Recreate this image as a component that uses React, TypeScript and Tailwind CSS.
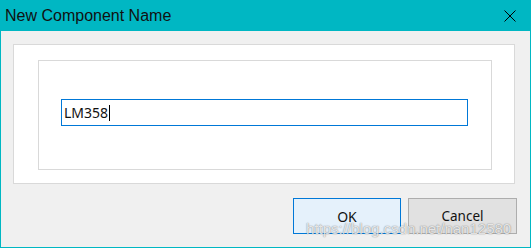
export default function App() {
  return (
    <div
      className="relative w-[531px] h-[248px] flex flex-col bg-[#f0f0f0] border-x border-b border-[#00b7c3] overflow-hidden"
      style={{ fontFamily: '"Noto Sans", "Liberation Sans", sans-serif' }}
    >
      {/* title bar */}
      <div className="h-[31px] -mx-px flex items-center justify-between bg-[#00b7c3] pl-[5px] pr-[15px] shrink-0">
        <span className="text-[16px] text-[#111] leading-none font-['Liberation_Sans',sans-serif]">
          New Component Name
        </span>
        <svg width="12" height="12" viewBox="0 0 12 12" className="mt-px">
          <path d="M0.5 0.5 L11.5 11.5 M11.5 0.5 L0.5 11.5" stroke="#000" strokeWidth="1" />
        </svg>
      </div>

      {/* outer panel */}
      <div className="mt-[13px] ml-[12px] w-[502px] h-[140px] bg-white border border-[#d9d9d9] pl-[24px] pt-[15px]">
        <div className="w-[454px] h-[110px] border border-[#d9d9d9] pl-[22px] pt-[38px]">
          <div className="w-[407px] h-[27px] border border-[#0078d7] bg-white flex items-center pl-[2px]">
            <span className="text-[14px] text-[#111] leading-none">LM358</span>
            <span className="w-px h-[16px] bg-black ml-px" />
          </div>
        </div>
      </div>

      {/* buttons */}
      <div className="mt-[14px] flex justify-end gap-[7px] pr-[13px]">
        <button className="w-[108px] h-[36px] bg-[#e5f1fb] border border-[#0078d7] text-[14px] text-[#111]">
          OK
        </button>
        <button className="w-[109px] h-[36px] bg-[#e1e1e1] border border-[#adadad] text-[13.5px] text-[#111]">
          Cancel
        </button>
      </div>

      {/* watermark */}
      <span
        className="absolute left-[305px] top-[221px] text-[15px] text-white/80 leading-none pointer-events-none font-['Liberation_Sans',sans-serif]"
        style={{ textShadow: "0 0 1px rgba(0,0,0,0.45), 0 0 2px rgba(0,0,0,0.2)" }}
      >
        https://blog.csdn.net/nan12580
      </span>
    </div>
  );
}
